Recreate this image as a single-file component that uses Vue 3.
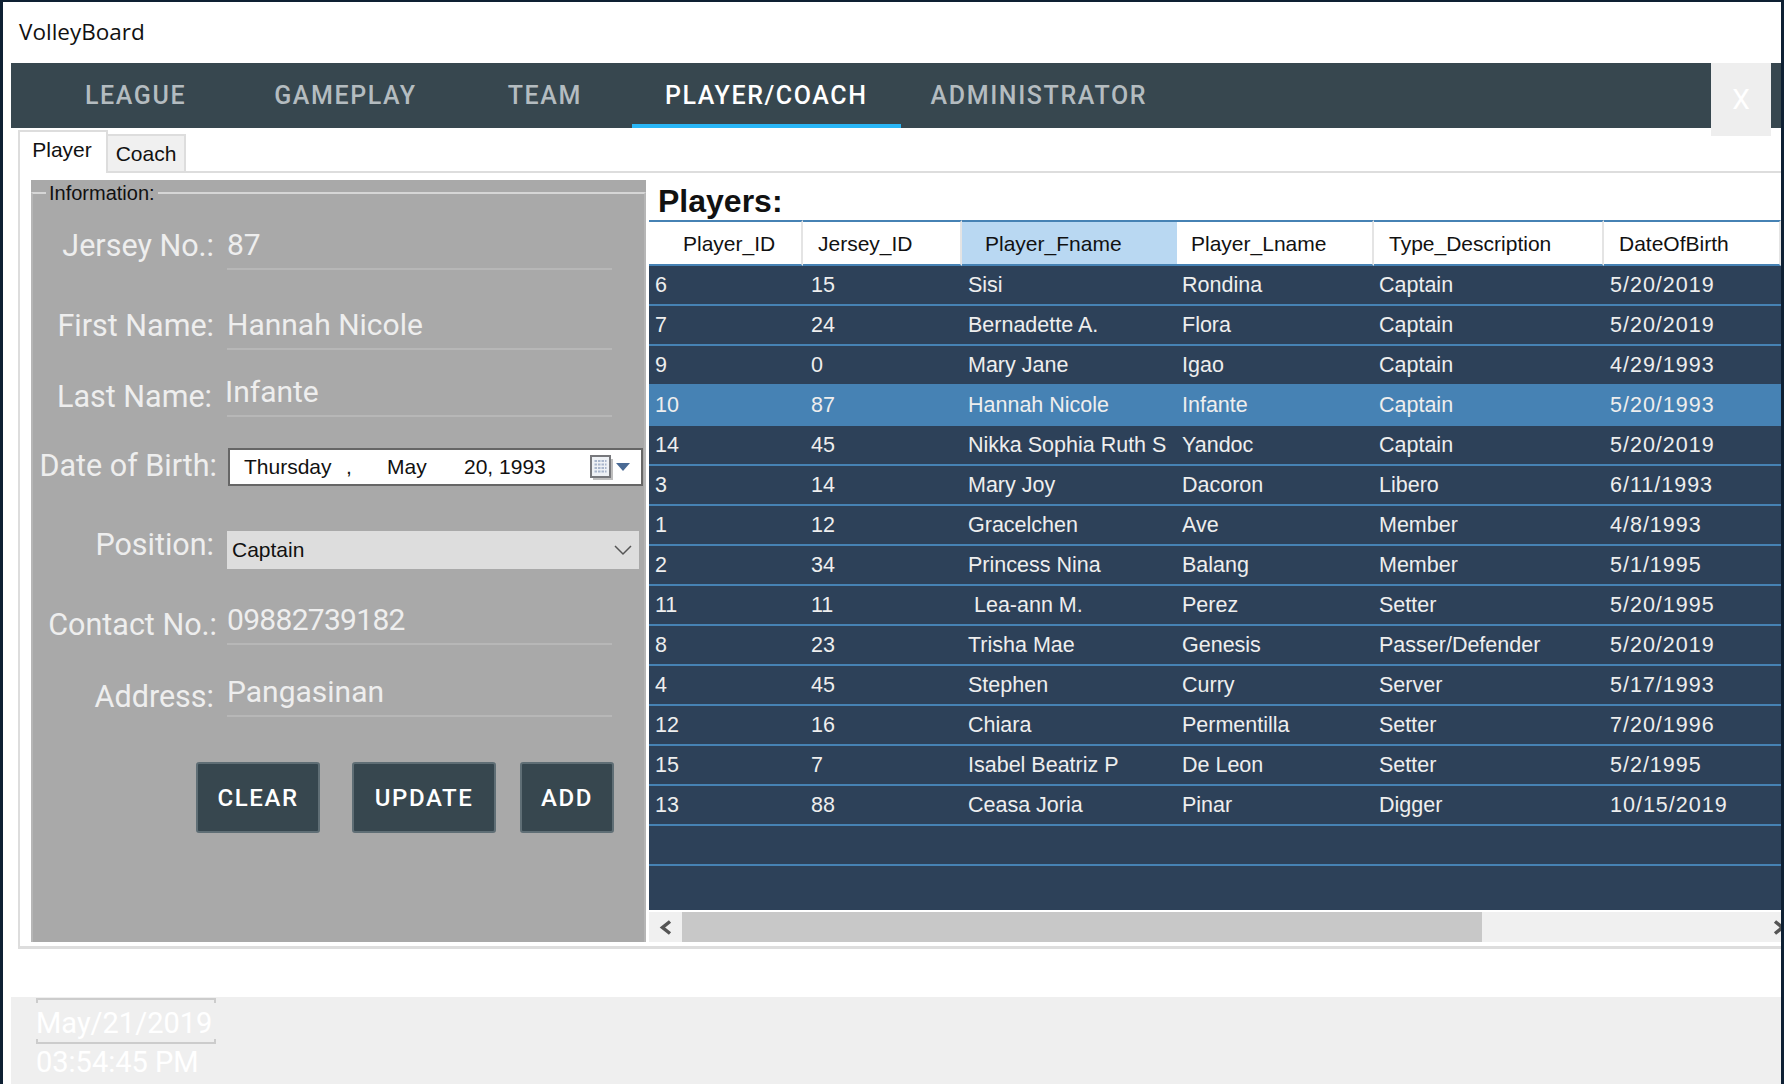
<script setup>
const navItems = ['LEAGUE', 'GAMEPLAY', 'TEAM', 'PLAYER/COACH', 'ADMINISTRATOR']

const columns = [
  { name: 'Player_ID', cls: 'h-id' },
  { name: 'Jersey_ID', cls: 'h-jersey' },
  { name: 'Player_Fname', cls: 'h-fname' },
  { name: 'Player_Lname', cls: 'h-lname' },
  { name: 'Type_Description', cls: 'h-type' },
  { name: 'DateOfBirth', cls: 'h-dob' },
]

const players = [
  ['6', '15', 'Sisi', 'Rondina', 'Captain', '5/20/2019'],
  ['7', '24', 'Bernadette A.', 'Flora', 'Captain', '5/20/2019'],
  ['9', '0', 'Mary Jane', 'Igao', 'Captain', '4/29/1993'],
  ['10', '87', 'Hannah Nicole', 'Infante', 'Captain', '5/20/1993'],
  ['14', '45', 'Nikka Sophia Ruth S', 'Yandoc', 'Captain', '5/20/2019'],
  ['3', '14', 'Mary Joy', 'Dacoron', 'Libero', '6/11/1993'],
  ['1', '12', 'Gracelchen', 'Ave', 'Member', '4/8/1993'],
  ['2', '34', 'Princess Nina', 'Balang', 'Member', '5/1/1995'],
  ['11', '11', '\u00a0Lea-ann M.', 'Perez', 'Setter', '5/20/1995'],
  ['8', '23', 'Trisha Mae', 'Genesis', 'Passer/Defender', '5/20/2019'],
  ['4', '45', 'Stephen', 'Curry', 'Server', '5/17/1993'],
  ['12', '16', 'Chiara', 'Permentilla', 'Setter', '7/20/1996'],
  ['15', '7', 'Isabel Beatriz P', 'De Leon', 'Setter', '5/2/1995'],
  ['13', '88', 'Ceasa Joria', 'Pinar', 'Digger', '10/15/2019'],
]
</script>

<template>
  <div class="window">
    <div class="title">VolleyBoard</div>

    <nav class="nav">
      <a v-for="item in navItems" :key="item" class="nav-item" :class="{ active: item === 'PLAYER/COACH' }">{{ item }}</a>
      <button class="close">X</button>
    </nav>

    <div class="tabs">
      <span class="tab on">Player</span>
      <span class="tab">Coach</span>
    </div>

    <div class="panel">
      <div class="group">
        <fieldset class="info">
          <legend>Information:</legend>

          <div class="row">
            <label>Jersey No.:</label>
            <div class="value">87</div>
          </div>
          <div class="row">
            <label>First Name:</label>
            <div class="value">Hannah Nicole</div>
          </div>
          <div class="row low">
            <label class="nudge-left">Last Name:</label>
            <div class="value shift">Infante</div>
          </div>
          <div class="row low">
            <label class="nudge-right">Date of Birth:</label>
            <div class="picker">
              <span class="p-day">Thursday</span>
              <span class="p-comma">,</span>
              <span class="p-month">May</span>
              <span class="p-date">20, 1993</span>
              <svg class="p-cal" width="23" height="25" viewBox="0 0 23 25">
                <rect x="3" y="4" width="20" height="21" fill="#bdbdbd" />
                <rect x="1" y="1" width="19" height="21" fill="#eef1f5" stroke="#77787c" stroke-width="2" />
                <path d="M4.500 6h12M4.500 9.500h12M4.500 13h12M4.500 16.500h12" stroke="#a9b6cc" stroke-width="2" stroke-dasharray="2.500 1" />
              </svg>
              <svg class="p-arrow" width="14" height="8" viewBox="0 0 14 8"><path d="M0 0h14l-7 8z" fill="#4a6a94" /></svg>
            </div>
          </div>
          <div class="row">
            <label>Position:</label>
            <div class="select">
              <span>Captain</span>
              <svg width="18" height="11" viewBox="0 0 18 11"><path d="M1 1l8 8 8-8" fill="none" stroke="#555" stroke-width="1.500" /></svg>
            </div>
          </div>
          <div class="row low">
            <label class="nudge-right">Contact No.:</label>
            <div class="value digits">09882739182</div>
          </div>
          <div class="row low">
            <label>Address:</label>
            <div class="value">Pangasinan</div>
          </div>

          <div class="actions">
            <button class="btn clear">CLEAR</button>
            <button class="btn update">UPDATE</button>
            <button class="btn add">ADD</button>
          </div>
        </fieldset>
      </div>

      <div class="players">
        <h2>Players:</h2>
        <div class="grid">
          <table>
            <colgroup>
              <col style="width: 154px" />
              <col style="width: 159px" />
              <col style="width: 215px" />
              <col style="width: 197px" />
              <col style="width: 230px" />
              <col style="width: 177px" />
            </colgroup>
            <thead>
              <tr>
                <th v-for="col in columns" :key="col.name" :class="col.cls">{{ col.name }}</th>
              </tr>
            </thead>
            <tbody>
              <tr v-for="p in players" :key="p[0]" :class="{ selected: p[0] === '10' }">
                <td v-for="(cell, c) in p" :key="c">{{ cell }}</td>
              </tr>
              <tr><td colspan="6">&nbsp;</td></tr>
            </tbody>
          </table>
        </div>
        <div class="scroll">
          <div class="sb-btn">
            <svg width="13" height="15" viewBox="0 0 13 15"><path d="M11 1.500L3.500 7.500 11 13.500" fill="none" stroke="#555" stroke-width="3.500" /></svg>
          </div>
          <div class="sb-thumb"></div>
          <div class="sb-track"></div>
          <div class="sb-btn end">
            <svg width="13" height="15" viewBox="0 0 13 15"><path d="M2 1.500L9.500 7.500 2 13.500" fill="none" stroke="#555" stroke-width="3.500" /></svg>
          </div>
        </div>
      </div>
    </div>

    <div class="gap"></div>

    <footer class="foot">
      <div class="date">May/21/2019</div>
      <div class="time">03:54:45 PM</div>
    </footer>
  </div>
</template>

<style>
html,
body {
  margin: 0;
  background: #0e2033;
}
</style>

<style scoped>
.window {
  position: relative;
  display: flex;
  flex-direction: column;
  width: 1778px;
  height: 1082px;
  margin: 2px 0 0 3px;
  background: #fff;
  overflow: hidden;
  font-family: "Liberation Sans", Arial, sans-serif;
}

.title {
  height: 61px;
  padding-left: 16px;
  font-family: "Open Sans", sans-serif;
  font-size: 22.500px;
  line-height: 60px;
  color: #111;
}

.nav {
  position: relative;
  display: flex;
  height: 65px;
  margin-left: 8px;
  padding-left: 30px;
  background: #37474f;
}

.nav-item {
  padding: 0 44px;
  font-family: Roboto, sans-serif;
  font-size: 25px;
  font-weight: 500;
  letter-spacing: 1.600px;
  line-height: 65px;
  color: #b4bcc0;
}

.nav-item:nth-child(3) {
  margin-left: 3px;
}

.nav-item.active {
  margin-left: 6px;
  padding: 0 33px;
  color: #fff;
  border-bottom: 4px solid #29b6f6;
  height: 61px;
}

.nav-item:nth-child(5) {
  padding-left: 30px;
}

.close {
  position: absolute;
  top: 0;
  left: 1700px;
  width: 60px;
  height: 73px;
  border: 0;
  background: #eeeeee;
  color: #fff;
  font-family: Roboto, sans-serif;
  font-size: 28px;
  line-height: 73px;
  padding: 0;
}

.tabs {
  display: flex;
  align-items: flex-end;
  height: 45px;
  margin-left: 15px;
  position: relative;
  z-index: 1;
  margin-bottom: -2px;
}

.tab {
  box-sizing: border-box;
  height: 39px;
  width: 78px;
  border: 2px solid #dddddd;
  border-left: 0;
  background: #f0f0f0;
  font-size: 21px;
  line-height: 36px;
  text-align: center;
  color: #111;
}

.tab.on {
  height: 43px;
  width: 90px;
  border-left: 2px solid #dddddd;
  border-bottom: 0;
  background: #fff;
  line-height: 36px;
  padding-right: 2px;
}

.panel {
  box-sizing: border-box;
  display: flex;
  height: 778px;
  margin-left: 15px;
  padding: 7px 0 0 11px;
  border: 2px solid #dddddd;
  border-width: 2px 0 3px 2px;
}

.group {
  flex: none;
  width: 615px;
  height: 762px;
  background: #a9a9a9;
}

.info {
  box-sizing: border-box;
  height: 100%;
  margin: 0;
  padding: 0;
  min-width: 0;
  border: 2px solid #d6d6d6;
  border-bottom: 0;
  border-left-color: #b6b6b6;
  border-right-color: #b6b6b6;
}

legend {
  margin-left: 13px;
  padding: 0 3px;
  font-size: 20px;
  line-height: 26px;
  color: #111;
}

.row {
  display: flex;
  align-items: flex-end;
  font-family: Roboto, sans-serif;
  font-size: 30.500px;
  line-height: 34px;
  color: #eeeeee;
}

.row:nth-of-type(1) { height: 64px; }
.row:nth-of-type(2) { height: 80px; }
.row:nth-of-type(3) { height: 67px; }
.row:nth-of-type(4) { height: 69px; }
.row:nth-of-type(5) { height: 83px; }
.row:nth-of-type(6) { height: 76px; }
.row:nth-of-type(7) { height: 72px; }

.row label {
  flex: none;
  width: 181px;
  margin-bottom: 7px;
  text-align: right;
  white-space: nowrap;
}

.row.low label {
  margin-bottom: 3px;
}

.row label.nudge-left {
  width: 179px;
  margin-right: 2px;
}

.row label.nudge-right {
  width: 184px;
  margin-right: -3px;
}

.value {
  box-sizing: border-box;
  width: 385px;
  margin-left: 13px;
  padding-bottom: 6px;
  border-bottom: 2px solid #b7b7b7;
  font-size: 30px;
}

.value.shift {
  text-indent: -2px;
}

.value.digits {
  letter-spacing: -0.700px;
}

.picker {
  box-sizing: border-box;
  display: flex;
  align-items: center;
  width: 415px;
  height: 38px;
  margin-left: 14px;
  border: 2px solid #666;
  background: #fff;
  font-family: "Liberation Sans", Arial, sans-serif;
  font-size: 21px;
  line-height: 34px;
  color: #111;
}

.p-day {
  margin-left: 14px;
  width: 102px;
}

.p-comma {
  width: 41px;
}

.p-month {
  width: 77px;
}

.p-date {
  width: 126px;
}

.p-cal {
  flex: none;
}

.p-arrow {
  flex: none;
  margin-left: 3px;
}

.select {
  box-sizing: border-box;
  display: flex;
  align-items: center;
  justify-content: space-between;
  width: 412px;
  height: 38px;
  margin-left: 13px;
  padding: 0 7px 0 5px;
  background: #dddddd;
  font-family: "Liberation Sans", Arial, sans-serif;
  font-size: 21px;
  color: #111;
}

.actions {
  display: flex;
  margin: 45px 0 0 163px;
}

.btn {
  box-sizing: border-box;
  height: 71px;
  padding: 0;
  border: 2px solid #5f6e75;
  border-radius: 3px;
  background: #37474f;
  color: #fff;
  font-family: Roboto, sans-serif;
  font-size: 24px;
  font-weight: 500;
  letter-spacing: 1.600px;
}

.clear { width: 124px; }
.update { width: 144px; margin-left: 32px; }
.add { width: 94px; margin-left: 24px; }

.players {
  flex: none;
  width: 1132px;
  margin-left: 3px;
}

h2 {
  height: 40px;
  margin: 0;
  padding-left: 9px;
  font-size: 32px;
  font-weight: 700;
  line-height: 42px;
  color: #111;
}

.grid {
  height: 690px;
  background: #2d4159;
}

table {
  width: 1132px;
  table-layout: fixed;
  border-spacing: 0;
  font-size: 21.500px;
}

th {
  height: 41px;
  padding: 1px 0 0;
  background: #fff;
  border-top: 2px solid #4682b4;
  border-bottom: 2px solid #4682b4;
  border-right: 2px solid #e4e4e4;
  font-size: 21px;
  font-weight: 400;
  text-align: left;
  color: #111;
}

th.h-id { padding-left: 34px; }
th.h-jersey { padding-left: 15px; }
th.h-fname { padding-left: 23px; background: #b9d8f2; border-right: 0; }
th.h-lname { padding-left: 14px; }
th.h-type { padding-left: 15px; }
th.h-dob { padding-left: 15px; }

td {
  height: 37px;
  padding: 1px 0 0;
  border-bottom: 2px solid #4682b4;
  color: #eeeeee;
  white-space: nowrap;
  overflow: hidden;
}

td:nth-child(1) { padding-left: 6px; }
td:nth-child(2) { padding-left: 8px; }
td:nth-child(3) { padding-left: 6px; }
td:nth-child(4) { padding-left: 5px; }
td:nth-child(5) { padding-left: 5px; }
td:nth-child(6) { padding-left: 6px; letter-spacing: 1px; }

tr.selected td {
  background: #4682b4;
}

.scroll {
  display: flex;
  height: 30px;
  margin-top: 2px;
  background: #f0f0f0;
}

.sb-btn {
  display: flex;
  align-items: center;
  justify-content: center;
  flex: none;
  width: 33px;
}

.sb-btn.end {
  justify-content: flex-end;
  margin-right: -5px;
}

.sb-thumb {
  flex: none;
  width: 800px;
  background: #c8c8c8;
}

.sb-track {
  flex: 1;
}

.gap {
  height: 48px;
}

.foot {
  flex: 1;
  margin-left: 8px;
  padding: 1px 0 0 25px;
  background: #efefef;
  font-family: Roboto, sans-serif;
  font-size: 29px;
  color: #fff;
}

.date {
  box-sizing: border-box;
  width: 180px;
  height: 46px;
  border-top: 2px solid #cccccc;
  border-bottom: 2px solid #cccccc;
  line-height: 46px;
  background:
    linear-gradient(#ccc, #ccc) 0 0 / 2px 3px no-repeat,
    linear-gradient(#ccc, #ccc) 100% 0 / 2px 3px no-repeat,
    linear-gradient(#ccc, #ccc) 0 100% / 2px 3px no-repeat,
    linear-gradient(#ccc, #ccc) 100% 100% / 2px 3px no-repeat;
}

.time {
  line-height: 36px;
}
</style>
